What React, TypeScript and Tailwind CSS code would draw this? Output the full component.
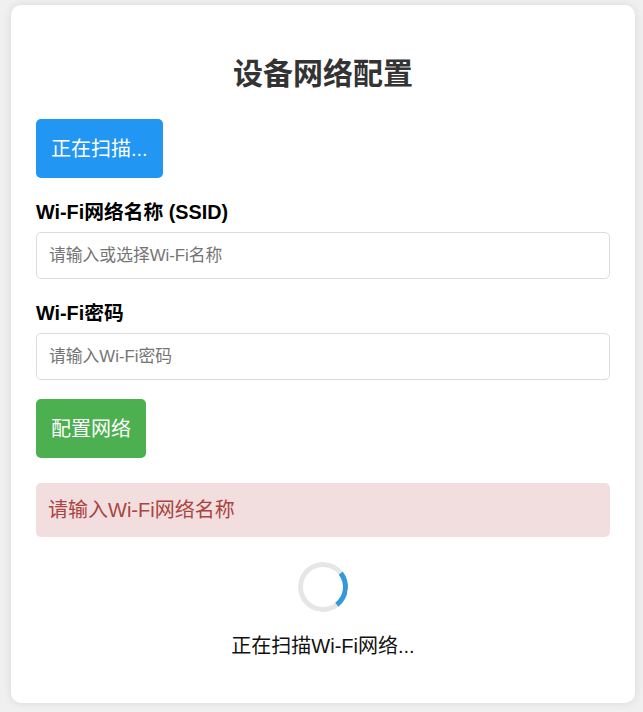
import React from "react";

export default function App() {
  const font = { fontFamily: '"Liberation Sans", "Noto Sans CJK SC", sans-serif' };
  return (
    <div className="min-h-[712px] w-[643px] bg-[#f0f0f0] pt-[5px] pl-[11px]" style={font}>
      <div className="w-[624px] h-[698px] rounded-[10px] bg-white px-[25px] pt-[25px] shadow-[0_0_10px_rgba(0,0,0,0.1)]">
        <h2 className="mt-[23px] mb-[24px] text-center text-[30px] font-bold leading-[42px] text-[#333]">
          设备网络配置
        </h2>
        <button className="h-[59px] rounded-[5px] bg-[#2196F3] px-[15px] text-[20px] leading-[28px] text-white">
          正在扫描...
        </button>
        <div className="mt-[20px]">
          <label className="block text-[19.8px] font-bold leading-[28px] text-black">
            Wi-Fi网络名称 (SSID)
          </label>
          <input
            className="mt-[6px] block h-[47px] w-full rounded-[5px] border border-[#dcdcdc] px-[12px] text-[16.8px] outline-none placeholder:text-[#757575]"
            placeholder="请输入或选择Wi-Fi名称"
          />
        </div>
        <div className="mt-[20px]">
          <label className="block text-[19.8px] font-bold leading-[28px] text-black">
            Wi-Fi密码
          </label>
          <input
            type="password"
            className="mt-[6px] block h-[47px] w-full rounded-[5px] border border-[#dcdcdc] px-[12px] text-[16.8px] outline-none placeholder:text-[#757575]"
            placeholder="请输入Wi-Fi密码"
          />
        </div>
        <button className="mt-[19px] h-[59px] rounded-[5px] bg-[#4CAF50] px-[15px] text-[20px] leading-[28px] text-white">
          配置网络
        </button>
        <div className="mt-[25px] flex h-[54px] items-center rounded-[5px] bg-[#f2dede] px-[12px] text-[20px] text-[#a94442]">
          请输入Wi-Fi网络名称
        </div>
        <div className="mt-[25px] flex flex-col items-center">
          <div className="h-[50px] w-[50px] rotate-[7deg] rounded-full border-[5px] border-[#e6e6e6] border-r-[#3498db]" />
          <p className="mt-[20px] text-[20px] leading-[28px] text-[#111]">正在扫描Wi-Fi网络...</p>
        </div>
      </div>
    </div>
  );
}
